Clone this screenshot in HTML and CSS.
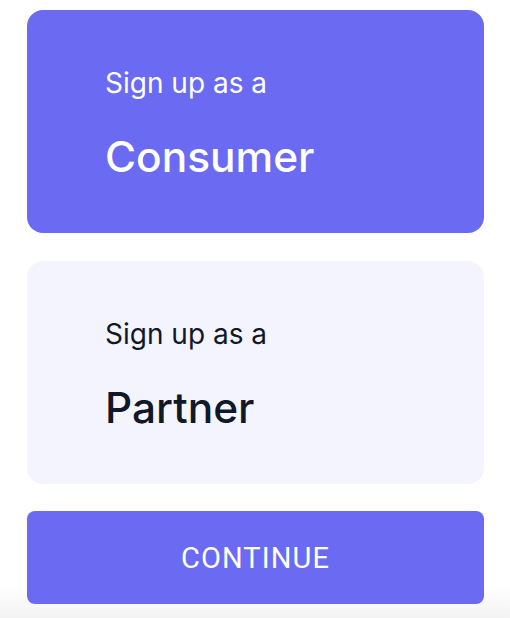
FILE: index.html
```html
<!DOCTYPE html>
<html lang="en">
<head>
<meta charset="utf-8">
<title>Sign up</title>
<link rel="stylesheet" href="styles.css">
</head>
<body>
<main class="page">
  <button class="role role--active" type="button">
    <span class="role__pre">Sign up as a</span>
    <span class="role__name">Consumer</span>
  </button>
  <button class="role" type="button">
    <span class="role__pre">Sign up as a</span>
    <span class="role__name">Partner</span>
  </button>
  <button class="continue" type="button">CONTINUE</button>
</main>
</body>
</html>
```
FILE: styles.css
```css
html {
  height: 100%;
  background: linear-gradient(to bottom, #ffffff 0, #ffffff calc(100% - 32px), #f3f3f3 100%);
}
body {
  margin: 0;
  font-family: Inter, "Noto Sans", sans-serif;
}
.page {
  display: flex;
  flex-direction: column;
  padding: 10px 26px 0 27px;
  gap: 28px;
}
.role {
  display: flex;
  flex-direction: column;
  align-items: flex-start;
  height: 223px;
  padding: 0 0 0 78px;
  border: none;
  border-radius: 16px;
  background: #f3f4fe;
  color: #111827;
  font-family: inherit;
  text-align: left;
  cursor: pointer;
}
.role--active {
  background: #6a6bf2;
  color: #ffffff;
}
.role__pre {
  margin-top: 56px;
  font-size: 28px;
  line-height: 34px;
}
.role__name {
  margin-top: 31px;
  font-size: 42.4px;
  line-height: 52px;
  font-weight: 450;
}
.continue {
  margin-top: -1px;
  height: 93px;
  border: none;
  border-radius: 8px;
  background: #6a6bf2;
  color: #ffffff;
  font-family: Roboto, "Liberation Sans", sans-serif;
  font-size: 29px;
  letter-spacing: 1.1px;
  cursor: pointer;
}
```
